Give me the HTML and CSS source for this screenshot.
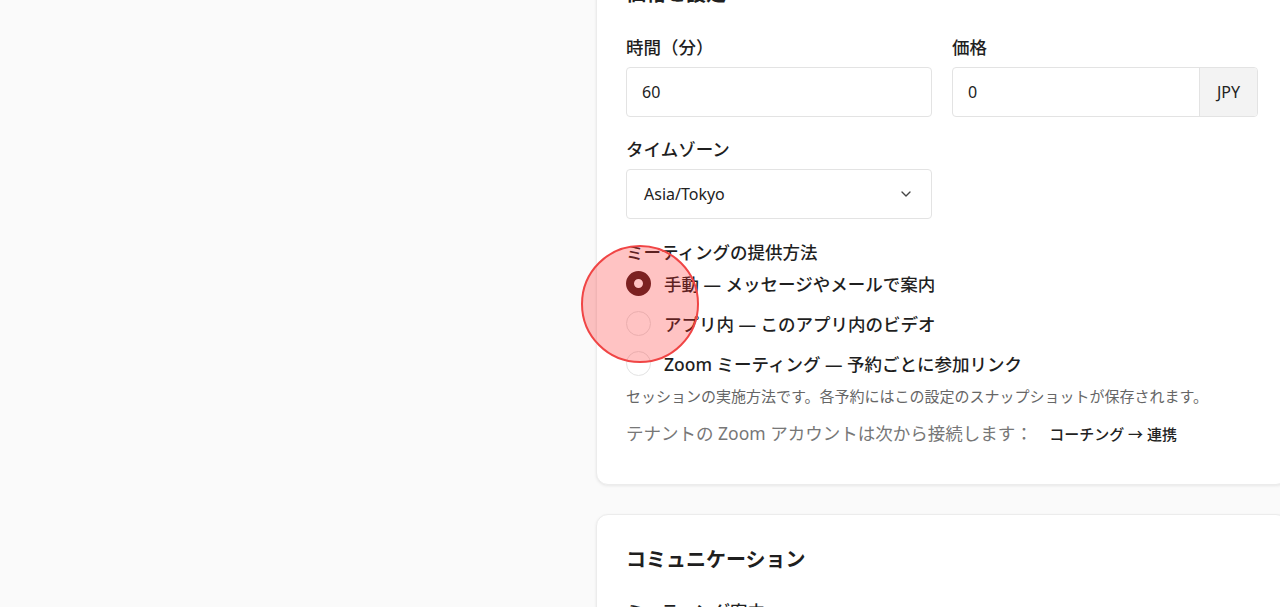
FILE: index.html
```html
<!DOCTYPE html>
<html lang="ja">
<head>
	<meta charset="UTF-8">
	<title>設定</title>
	<link rel="stylesheet" href="styles.css">
</head>
<body>
	<div class="page">
		<div class="side"></div>
		<div class="main">
			<div class="card first">
				<h2>価格と設定</h2>
				<div class="row">
					<div class="field">
						<label>時間（分）</label>
						<div class="input">60</div>
					</div>
					<div class="field">
						<label>価格</label>
						<div class="input group">
							<span class="val">0</span>
							<span class="addon">JPY</span>
						</div>
					</div>
				</div>
				<div class="row">
					<div class="field">
						<label>タイムゾーン</label>
						<div class="input select">
							<span>Asia/Tokyo</span>
							<svg width="16" height="16" viewBox="0 0 24 24" fill="none" stroke="#444" stroke-width="2" stroke-linecap="round" stroke-linejoin="round"><path d="M6 9l6 6 6-6"/></svg>
						</div>
					</div>
					<div class="field"></div>
				</div>
				<div class="radios">
					<label>ミーティングの提供方法</label>
					<div class="opt"><span class="dot on"></span>手動 — メッセージやメールで案内</div>
					<div class="opt"><span class="dot"></span>アプリ内 — このアプリ内のビデオ</div>
					<div class="opt"><span class="dot"></span>Zoom ミーティング — 予約ごとに参加リンク</div>
				</div>
				<p class="help">セッションの実施方法です。各予約にはこの設定のスナップショットが保存されます。</p>
				<p class="note">テナントの Zoom アカウントは次から接続します： <a class="link">コーチング → 連携</a></p>
			</div>
			<div class="card">
				<h2>コミュニケーション</h2>
				<label>ミーティング案内</label>
			</div>
		</div>
	</div>
	<div class="tap"></div>
</body>
</html>
```
FILE: styles.css
```css
html, body {
	margin: 0;
	height: 100%;
	overflow: hidden;
}
body {
	background: #fafafa;
	font-family: "Noto Sans", "Noto Sans CJK JP", sans-serif;
	color: #1f1f1f;
}
.page {
	display: flex;
	margin-top: -52px;
}
.side {
	width: 596px;
	flex-shrink: 0;
}
.main {
	width: 692px;
	flex-shrink: 0;
	display: flex;
	flex-direction: column;
	gap: 29px;
}
.card {
	background: #fff;
	border: 1px solid #ececec;
	border-radius: 12px;
	box-shadow: 0 1px 3px rgba(0, 0, 0, 0.08);
	padding: 30px 29px 29px;
}
.card h2 {
	font-size: 20px;
	font-weight: 700;
	margin: 0 0 26px;
	line-height: 30px;
}
.card + .card h2 {
	margin-bottom: 24px;
}
.card.first {
	padding-bottom: 38px;
}
.row {
	display: flex;
	gap: 20px;
	margin-bottom: 20px;
}
.field {
	flex: 1;
}
label {
	display: block;
	font-size: 17.5px;
	font-weight: 500;
	line-height: 24px;
	margin-bottom: 8px;
}
.input {
	height: 48px;
	border: 1px solid #e3e3e3;
	border-radius: 4px;
	display: flex;
	align-items: center;
	padding: 0 15px;
	font-size: 16px;
	color: #222;
}
.input.group {
	padding: 0;
	overflow: hidden;
}
.input.group .val {
	flex: 1;
	padding: 0 15px;
}
.input.group .addon {
	width: 57px;
	height: 100%;
	background: #f3f3f3;
	border-left: 1px solid #e3e3e3;
	display: flex;
	align-items: center;
	justify-content: center;
	font-size: 16px;
}
.input.select {
	justify-content: space-between;
	padding: 0 17px;
}
.radios {
	margin-top: 22px;
}
.radios label {
	line-height: 22px;
	margin-bottom: 0;
}
.opt {
	display: flex;
	align-items: center;
	gap: 13px;
	height: 40px;
	font-size: 17.5px;
	font-weight: 500;
}
.dot {
	width: 25px;
	height: 25px;
	border-radius: 50%;
	border: 1px solid #e3e3e3;
	box-sizing: border-box;
	background: #fff;
}
.dot.on {
	border: 8px solid #4a1f1f;
}
.help {
	margin: 2px 0 0;
	font-size: 15px;
	color: #666;
	line-height: 22px;
}
.note {
	margin: 14px 0 0;
	font-size: 17.5px;
	color: #777;
	line-height: 24px;
}
.note .link {
	margin-left: 12px;
	font-size: 15px;
	font-weight: 500;
	color: #222;
}
.tap {
	position: absolute;
	left: 581px;
	top: 245px;
	width: 118px;
	height: 118px;
	box-sizing: border-box;
	border-radius: 50%;
	border: 2px solid #f04545;
	background: rgba(255, 40, 40, 0.28);
}
```
